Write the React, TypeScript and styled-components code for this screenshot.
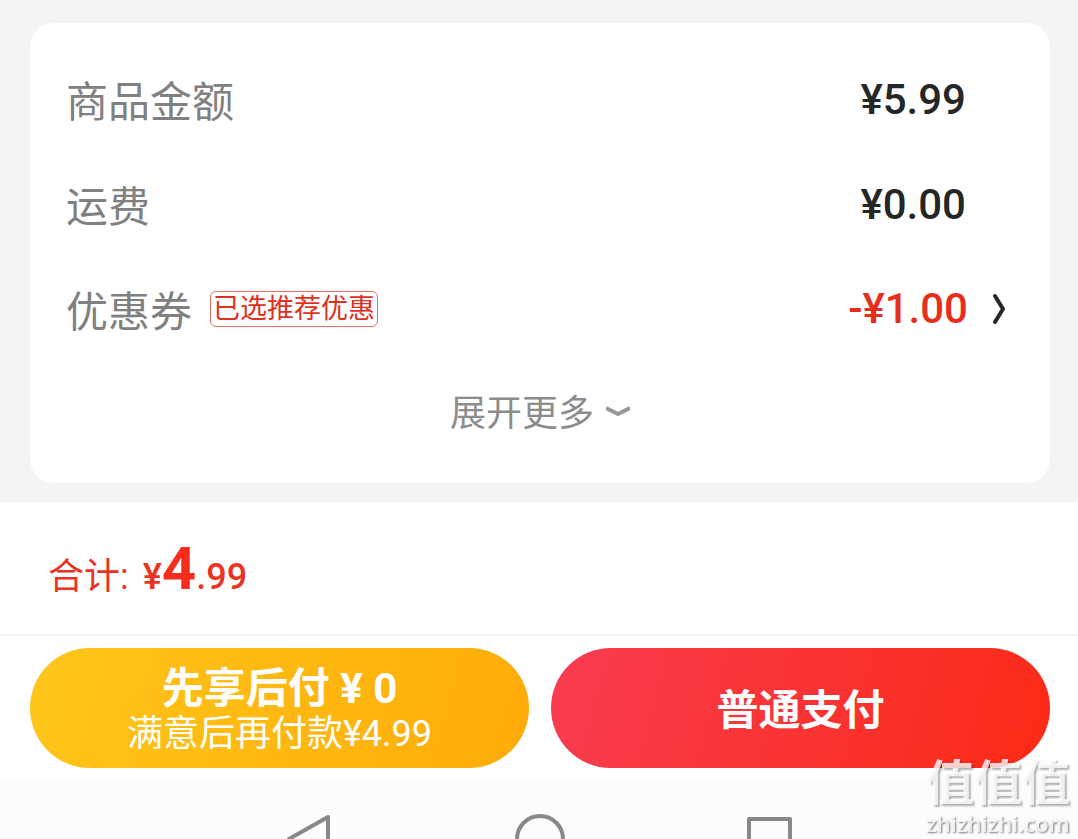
import React from 'react';
import styled, { createGlobalStyle } from 'styled-components';

const GlobalStyle = createGlobalStyle`
  *, *::before, *::after { box-sizing: border-box; }
  html, body, #root { height: 100%; }
  body {
    margin: 0;
    background: #f4f4f4;
    font-family: Roboto, "Noto Sans CJK SC", sans-serif;
    overflow: hidden;
  }
  button {
    border: 0;
    padding: 0;
    background: none;
    font: inherit;
    color: inherit;
    cursor: pointer;
  }
`;

const Page = styled.div`
  min-height: 100%;
  display: flex;
  flex-direction: column;
`;

const Card = styled.section`
  margin: 23px 28px 19px 30px;
  padding: 26px 36px 23px;
  border-radius: 24px;
  background: #fff;
`;

const Row = styled.div`
  display: flex;
  align-items: center;
  justify-content: space-between;
  height: 105px;
`;

const Label = styled.span`
  display: flex;
  align-items: center;
  gap: 18px;
  padding-top: 2px;
  font-size: 42px;
  line-height: 60px;
  color: #808080;
`;

const Tag = styled.span`
  padding: 0 2px;
  margin-bottom: 8px;
  border: 1px solid #e6705f;
  border-radius: 6px;
  font-size: 27px;
  line-height: 34px;
  color: #e0301e;
`;

const Amount = styled.span`
  padding: 0 48px 4px 0;
  font-size: 42px;
  line-height: 50px;
  font-weight: 500;
  color: #262626;
`;

const CouponButton = styled.button`
  display: flex;
  align-items: center;
  gap: 22px;
  padding: 0 8px 6px 0;
  font-size: 42px;
  line-height: 50px;
  font-weight: 500;
  color: #e62e1c;
`;

const ExpandButton = styled.button`
  display: flex;
  align-items: center;
  gap: 12px;
  height: 96px;
  margin: 0 auto;
  font-size: 36px;
  line-height: 52px;
  color: #8c8c8c;
`;

const ExpandText = styled.span`
  padding-top: 4px;
`;

const Total = styled.div`
  height: 134px;
  padding: 32px 48px 0;
  border-bottom: 2px solid #f4f4f4;
  background: #fff;
  font-size: 36px;
  line-height: 70px;
  color: #ea3323;
`;

const Price = styled.span`
  margin-left: 14px;
  font-weight: 500;
`;

const Whole = styled.strong`
  font-size: 60px;
  font-weight: 700;
  color: #f72c1c;
`;

const Actions = styled.div`
  display: flex;
  gap: 22px;
  padding: 12px 28px 12px 30px;
  background: #fff;
`;

const PayButton = styled.button<{ $from: string; $to: string }>`
  flex: 1;
  display: flex;
  flex-direction: column;
  align-items: center;
  justify-content: center;
  height: 120px;
  padding-top: 5px;
  border-radius: 60px;
  background: linear-gradient(105deg, ${p => p.$from}, ${p => p.$to});
  color: #fff;
`;

const PayTitle = styled.span`
  font-size: 42px;
  line-height: 46px;
  font-weight: 700;
`;

const PayNote = styled.span`
  font-size: 36px;
  line-height: 44px;
`;

const SystemNav = styled.nav`
  flex: 1;
  display: flex;
  justify-content: center;
  gap: 180px;
  min-height: 59px;
  padding: 34px 0 0 2px;
  background: #fcfcfc;
`;

const NavButton = styled.button`
  display: flex;
  width: 50px;
  height: 50px;
`;

const Watermark = styled.div`
  position: fixed;
  right: 8px;
  bottom: 4px;
  display: flex;
  flex-direction: column;
  align-items: center;
  gap: 2px;
  color: rgba(255, 255, 255, 0.8);
  pointer-events: none;
`;

const WatermarkName = styled.span`
  font-size: 48px;
  line-height: 50px;
  font-weight: 700;
  text-shadow: 2px 2px 2px rgba(0, 0, 0, 0.3);
`;

const WatermarkSite = styled.span`
  font-family: "Open Sans", sans-serif;
  font-size: 22px;
  line-height: 24px;
  font-weight: 600;
  text-shadow: 1px 1px 2px rgba(0, 0, 0, 0.5);
`;

export default function App() {
  return (
    <>
      <GlobalStyle />
      <Page>
        <Card>
          <Row>
            <Label>商品金额</Label>
            <Amount>¥5.99</Amount>
          </Row>
          <Row>
            <Label>运费</Label>
            <Amount>¥0.00</Amount>
          </Row>
          <Row>
            <Label>
              优惠券<Tag>已选推荐优惠</Tag>
            </Label>
            <CouponButton>
              -¥1.00
              <svg width="16" height="32" viewBox="0 0 16 32" fill="none" stroke="#262626" strokeWidth="4" strokeLinecap="round" strokeLinejoin="round">
                <path d="M5 3L13 16L5 29" />
              </svg>
            </CouponButton>
          </Row>
          <ExpandButton>
            <ExpandText>展开更多</ExpandText>
            <svg width="24" height="16" viewBox="0 0 24 16" fill="none" stroke="#999" strokeWidth="4">
              <path d="M0 4L12 10L24 4" />
            </svg>
          </ExpandButton>
        </Card>
        <Total>
          合计:
          <Price>
            ¥<Whole>4</Whole>.99
          </Price>
        </Total>
        <Actions>
          <PayButton $from="#ffc61a" $to="#ffab08">
            <PayTitle>先享后付 ¥ 0</PayTitle>
            <PayNote>满意后再付款¥4.99</PayNote>
          </PayButton>
          <PayButton $from="#f83c50" $to="#fc2a16">
            <PayTitle>普通支付</PayTitle>
          </PayButton>
        </Actions>
        <SystemNav>
          <NavButton aria-label="返回">
            <svg width="50" height="50" viewBox="0 0 50 50" fill="none" stroke="#888" strokeWidth="4" strokeLinejoin="round">
              <path d="M43 3V47L4 25Z" />
            </svg>
          </NavButton>
          <NavButton aria-label="主页">
            <svg width="50" height="50" viewBox="0 0 50 50" fill="none" stroke="#888" strokeWidth="4">
              <circle cx="25" cy="25" r="23" />
            </svg>
          </NavButton>
          <NavButton aria-label="最近任务">
            <svg width="50" height="50" viewBox="0 0 50 50" fill="none" stroke="#888" strokeWidth="4" strokeLinejoin="round">
              <rect x="4" y="5" width="41" height="41" />
            </svg>
          </NavButton>
        </SystemNav>
      </Page>
      <Watermark>
        <WatermarkName>值值值</WatermarkName>
        <WatermarkSite>zhizhizhi.com</WatermarkSite>
      </Watermark>
    </>
  );
}
